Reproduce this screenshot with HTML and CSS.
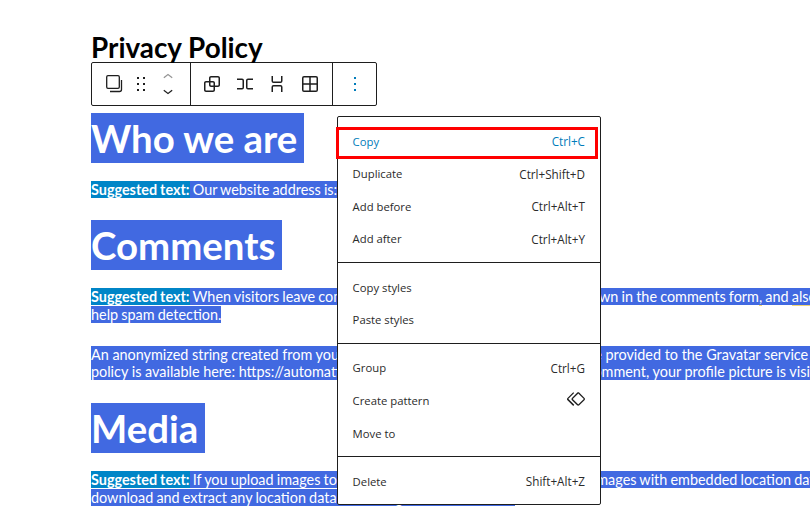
FILE: index.html
```html
<!DOCTYPE html>
<html lang="en">
<head>
    <meta charset="UTF-8">
    <meta name="viewport" content="width=device-width, initial-scale=1.0">
    <title>Privacy Policy</title>
    <link rel="stylesheet" href="styles.css">
</head>
<body>

<div class="editor">
    <h1 class="page-title">Privacy Policy</h1>

    <div class="toolbar">
        <div class="tool-group first">
            <button class="tool">
                <svg width="24" height="24" viewBox="0 0 24 24"><path d="M6 3.7h10c.7 0 1.3.6 1.3 1.3v10c0 .7-.6 1.3-1.3 1.3H6c-.7 0-1.3-.6-1.3-1.3V5c0-.7.6-1.3 1.3-1.3z" fill="none" stroke="#1e1e1e" stroke-width="1.3"/><path d="M19.5 8v9.5c0 1-.8 2-2 2H8" fill="none" stroke="#1e1e1e" stroke-width="1.3"/></svg>
            </button>
            <button class="tool">
                <svg width="24" height="24" viewBox="0 0 24 24"><path d="M8 7h2V5H8v2zm0 6h2v-2H8v2zm0 6h2v-2H8v2zm6-14v2h2V5h-2zm0 8h2v-2h-2v2zm0 6h2v-2h-2v2z"/></svg>
            </button>
            <div class="mover">
                <svg class="mover-up" width="20" height="12" viewBox="0 5 24 14"><path d="M6.5 12.4L12 8l5.5 4.4-.9 1.2L12 10l-4.5 3.6-1-1.2z"/></svg>
                <svg width="20" height="12" viewBox="0 5 24 14"><path d="M17.5 11.6L12 16l-5.5-4.4.9-1.2L12 14l4.5-3.6 1 1.2z"/></svg>
            </div>
        </div>
        <div class="tool-group second">
            <button class="tool">
                <svg width="24" height="24" viewBox="0 0 24 24"><path d="M18 4h-7c-1.1 0-2 .9-2 2v3H6c-1.1 0-2 .9-2 2v7c0 1.1.9 2 2 2h7c1.1 0 2-.9 2-2v-3h3c1.1 0 2-.9 2-2V6c0-1.1-.9-2-2-2zm-4.5 14c0 .3-.2.5-.5.5H6c-.3 0-.5-.2-.5-.5v-7c0-.3.2-.5.5-.5h3V13c0 1.1.9 2 2 2h2.5v3zm0-4.5H11c-.3 0-.5-.2-.5-.5v-2.5H13c.3 0 .5.2.5.5v2.5zm5-.5c0 .3-.2.5-.5.5h-3V11c0-1.1-.9-2-2-2h-2.5V6c0-.3.2-.5.5-.5h7c.3 0 .5.2.5.5v7z"/></svg>
            </button>
            <button class="tool">
                <svg width="24" height="24" viewBox="0 0 24 24"><path d="M4 6.5h5a2 2 0 0 1 2 2v7a2 2 0 0 1-2 2H4V16h5a.5.5 0 0 0 .5-.5v-7A.5.5 0 0 0 9 8H4V6.5Zm16 0h-5a2 2 0 0 0-2 2v7a2 2 0 0 0 2 2h5V16h-5a.5.5 0 0 1-.5-.5v-7A.5.5 0 0 1 15 8h5V6.5Z"/></svg>
            </button>
            <button class="tool">
                <svg width="24" height="24" viewBox="0 0 24 24"><path d="M17.5 4v5a2 2 0 0 1-2 2h-7a2 2 0 0 1-2-2V4H8v5a.5.5 0 0 0 .5.5h7A.5.5 0 0 0 16 9V4h1.5Zm0 16v-5a2 2 0 0 0-2-2h-7a2 2 0 0 0-2 2v5H8v-5a.5.5 0 0 1 .5-.5h7a.5.5 0 0 1 .5.5v5h1.5Z"/></svg>
            </button>
            <button class="tool">
                <svg width="24" height="24" viewBox="0 0 24 24"><path fill-rule="evenodd" d="M4 6a2 2 0 012-2h12a2 2 0 012 2v12a2 2 0 01-2 2H6a2 2 0 01-2-2V6zm2-.5h5.25v5.75H5.5V6a.5.5 0 01.5-.5zm-.5 7.25V18a.5.5 0 00.5.5h5.25v-5.75H5.5zm7.25 5.75H18a.5.5 0 00.5-.5v-5.25h-5.75v5.75zm5.75-7.25V6a.5.5 0 00-.5-.5h-5.25v5.75h5.75z"/></svg>
            </button>
        </div>
        <div class="tool-group third">
            <button class="tool options">
                <svg width="24" height="24" viewBox="0 0 24 24"><path d="M13 19h-2v-2h2v2zm0-6h-2v-2h2v2zm0-6h-2V5h2v2z"/></svg>
            </button>
        </div>
    </div>

    <h2 class="heading"><span class="sel">Who we are</span></h2>
    <p class="para lead"><span class="sel"><strong class="sel-strong">Suggested text:</strong> Our website address is: https://example.com.</span></p>

    <h2 class="heading"><span class="sel">Comments</span></h2>
    <p class="para lead tall"><span class="sel"><strong class="sel-strong">Suggested text:</strong> When visitors leave comments on the site we collect the data shown in the comments form<span class="spell">,</span> and <span class="spell">also the visitor's IP address and browser user agent string to</span><br>help spam detection.</span></p>
    <p class="para tall"><span class="sel">An anonymized string created from your email address (also called a hash) may be provided to the Gravatar service to see if you are using it. The Gravatar service privacy<br>policy is available here: https://automattic.com/privacy/. After approval of your comment, your profile picture is visible to the public in the context of your comment.</span></p>

    <h2 class="heading"><span class="sel">Media</span></h2>
    <p class="para lead"><span class="sel"><strong class="sel-strong">Suggested text:</strong> If you upload images to the website, you should avoid uploading images with embedded location data (EXIF GPS) included. Visitors to the website can<br>download and extract any location data from images on the website.</span></p>
</div>

<div class="menu">
    <div class="menu-group">
        <div class="menu-item active"><span class="label">Copy</span><span class="shortcut">Ctrl+C</span></div>
        <div class="menu-item"><span class="label">Duplicate</span><span class="shortcut">Ctrl+Shift+D</span></div>
        <div class="menu-item"><span class="label">Add before</span><span class="shortcut">Ctrl+Alt+T</span></div>
        <div class="menu-item"><span class="label">Add after</span><span class="shortcut">Ctrl+Alt+Y</span></div>
    </div>
    <div class="menu-group">
        <div class="menu-item"><span class="label">Copy styles</span></div>
        <div class="menu-item"><span class="label">Paste styles</span></div>
    </div>
    <div class="menu-group">
        <div class="menu-item"><span class="label">Group</span><span class="shortcut">Ctrl+G</span></div>
        <div class="menu-item"><span class="label">Create pattern</span>
            <svg class="menu-icon" width="24" height="24" viewBox="0 0 24 24"><path d="M21.3 10.8l-5.6-5.6c-.7-.7-1.8-.7-2.5 0l-5.6 5.6c-.7.7-.7 1.8 0 2.5l5.6 5.6c.3.3.8.5 1.2.5s.9-.2 1.2-.5l5.6-5.6c.8-.7.8-1.9.1-2.5zm-1 1.4l-5.6 5.6c-.1.1-.3.1-.4 0l-5.6-5.6c-.1-.1-.1-.3 0-.4l5.6-5.6s.1-.1.2-.1.1 0 .2.1l5.6 5.6c.1.1.1.3 0 .4zm-16.6-.4L10 5.5l-1-1-6.3 6.3c-.7.7-.7 1.8 0 2.5L9 19.5l1.1-1.1-6.3-6.3c-.2 0-.2-.2-.1-.3z"/></svg>
        </div>
        <div class="menu-item"><span class="label">Move to</span></div>
    </div>
    <div class="menu-group">
        <div class="menu-item"><span class="label">Delete</span><span class="shortcut">Shift+Alt+Z</span></div>
    </div>
    <div class="highlight-box"></div>
</div>

</body>
</html>
```

FILE: styles.css
```css
html, body {
    margin: 0;
    height: 100%;
    overflow: hidden;
}

body {
    background-color: #ffffff;
    color: #000;
    font-family: 'Lato', sans-serif;
    position: relative;
}

.editor {
    padding: 33px 0 0 91px;
    width: 1200px;
}

.page-title {
    margin: 0;
    font-size: 27.84px;
    line-height: 29px;
    font-weight: 700;
}

/* Block toolbar */
.toolbar {
    display: flex;
    box-sizing: border-box;
    width: 286px;
    height: 44px;
    border: 1px solid #1e1e1e;
    border-radius: 2px;
    margin-bottom: 7px;
}

.tool-group {
    display: flex;
    align-items: center;
    border-right: 1px solid #1e1e1e;
    box-sizing: border-box;
}

.tool-group.first {
    width: 99px;
    padding-left: 10px;
    gap: 3px;
}

.tool-group.second {
    width: 142px;
    padding-left: 9px;
    gap: 8.7px;
}

.tool-group.third {
    border-right: none;
    flex: 1;
    justify-content: center;
}

.tool {
    border: none;
    background: none;
    padding: 0;
    width: 24px;
    height: 24px;
    color: #1e1e1e;
}

.tool svg, .mover svg {
    display: block;
    fill: #1e1e1e;
}

.tool.options svg {
    fill: #007cba;
}

.mover {
    display: flex;
    flex-direction: column;
    align-items: center;
    gap: 2px;
    width: 24px;
}

.mover svg.mover-up {
    fill: #949494;
}

/* Post content, all selected */
.heading {
    margin: 0 0 18px;
    font-size: 38.4px;
    line-height: 50px;
    font-weight: 700;
    color: #fff;
}

.heading .sel {
    padding: 2px 7px 2px 0;
}

.para {
    margin: 0 0 22px;
    font-size: 14.4px;
    line-height: 17.3px;
    color: #fff;
    white-space: nowrap;
}

.para.lead {
    word-spacing: -0.5px;
}

.para.tall {
    margin-bottom: 23px;
}

.sel {
    background-color: #4169e1;
}

.sel-strong {
    background-color: #0085c7;
}

.spell {
    box-shadow: 0 1px 0 #f2d675;
}

/* Options dropdown */
.menu {
    position: absolute;
    left: 337px;
    top: 116px;
    box-sizing: border-box;
    width: 264px;
    background: #fff;
    border: 1px solid #1e1e1e;
    border-radius: 2px;
    font-family: 'Open Sans', sans-serif;
    color: #2b2b2b;
}

.menu-group {
    padding: 8.4px 0 6.2px;
    border-top: 1px solid #1e1e1e;
}

.menu-group:first-child {
    border-top: none;
}

.menu-item {
    display: flex;
    justify-content: space-between;
    align-items: center;
    box-sizing: border-box;
    height: 32.6px;
    padding: 0 15px 1px 14.6px;
}

.label {
    font-size: 11.3px;
}

.shortcut {
    font-size: 11.7px;
}

.menu-item.active {
    color: #007cba;
}

.menu-icon {
    fill: #1e1e1e;
    width: 22px;
    height: 22px;
    margin-right: -2px;
    margin-top: -3px;
}

.highlight-box {
    position: absolute;
    left: -2px;
    top: 10px;
    box-sizing: border-box;
    width: 262px;
    height: 32px;
    border: 3px solid #f00;
}
```
